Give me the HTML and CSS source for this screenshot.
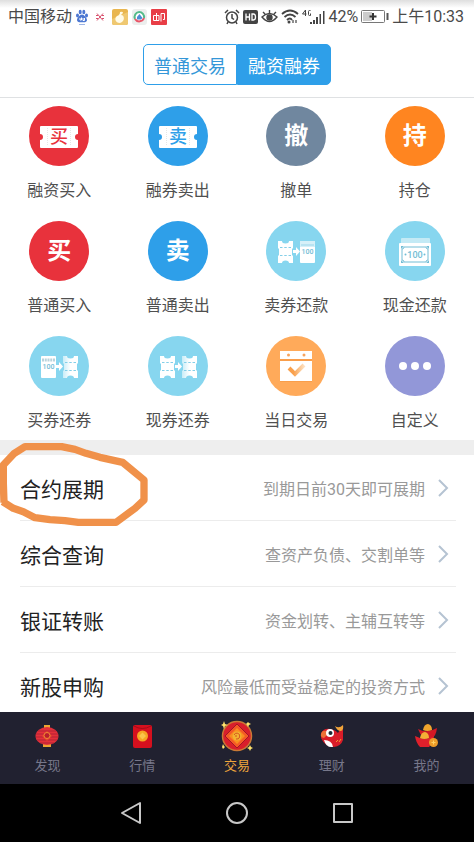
FILE: index.html
```html
<!DOCTYPE html>
<html lang="zh-CN">
<head>
<meta charset="utf-8">
<meta name="viewport" content="width=device-width, initial-scale=1">
<title>融资融券</title>
<link rel="stylesheet" href="styles.css">
</head>
<body>
<svg class="defs" aria-hidden="true">
  <defs>
    <linearGradient id="fade" x1="0" x2="1"><stop offset="0" stop-color="#c9edf8"/><stop offset=".5" stop-color="#fff"/></linearGradient>
    <linearGradient id="tick" x1="0" x2="1"><stop offset=".3" stop-color="#f9a04c"/><stop offset="1" stop-color="#fde0c0"/></linearGradient>
    <symbol id="ticket" viewBox="0 0 38 22"><path fill="#fff" d="M1 0h36q1 0 1 1v7a3 3 0 0 0 0 6v7q0 1-1 1H1q-1 0-1-1v-7a3 3 0 0 0 0-6V1q0-1 1-1z"/><path d="M7.500 2v18M30.500 2v18" stroke="#e6e6e6" stroke-dasharray="1 1"/></symbol>
    <symbol id="coupon" viewBox="0 0 15 22"><path d="M0 0h4a3.500 2.500 0 0 0 7 0h4v7l-1 1v6l1 1v7h-4a3.500 2.500 0 0 0-7 0H0v-7l1-1V8L0 7z"/><path d="M2 6.500h11M2 14.500h11" stroke="#84cfe8" stroke-dasharray="2.500 1.750"/></symbol>
    <symbol id="arrow" viewBox="0 0 7 9"><path fill="#fff" d="M0 3h3V0l4 4.500L3 9V6H0z"/></symbol>
  </defs>
</svg>
<div class="app">
  <header class="status">
    <div class="status-group">
      <span class="carrier">中国移动</span>
      <svg width="12" height="16" viewBox="0 0 12 16"><g fill="#4d78d2"><ellipse cx="1.500" cy="6.500" rx="1.500" ry="2"/><ellipse cx="4.200" cy="3" rx="1.500" ry="2.200"/><ellipse cx="7.800" cy="3" rx="1.500" ry="2.200"/><ellipse cx="10.500" cy="6.500" rx="1.500" ry="2"/><path d="M6 5.500c2 0 5 3.500 5 5.500s-2 2.500-5 2.200C3 13.500 1 13 1 11s3-5.500 5-5.500z"/></g><path d="M4 9v2h1.500V8.500M7 9v2.500h1.500V9" fill="none" stroke="#fff"/><path d="M3 15.500h6" stroke="#9db4e4"/></svg>
      <svg class="cross" width="8" height="8" viewBox="0 0 8 8"><path d="M1 .5l6 7M7 .5l-6 7M0 2.500h2M6 2.500h2M0 5.500h2M6 5.500h2" fill="none" stroke="#d8506c"/></svg>
      <svg width="16" height="16" viewBox="0 0 16 16"><rect width="16" height="16" rx="2" fill="#e9b64f"/><path d="M0 10L16 3v11q0 2-2 2H2q-2 0-2-2z" fill="#efc871"/><path d="M8 3q3-1 3 1L9 6c4 0 4 7-1 8-5 0-6-5-3-7q3-1 3-4z" fill="#fffbe8"/></svg>
      <svg width="15" height="16" viewBox="0 0 15 16"><rect width="15" height="16" rx="3" fill="#eceeed"/><circle cx="7.500" cy="8" r="5" fill="#fff"/><g fill="none" stroke-width="2"><path d="M3 10a5 5 0 0 1 4-7" stroke="#54bb8a"/><path d="M7 3a5 5 0 0 1 5 6" stroke="#54bb8a"/><path d="M12 9a5 5 0 0 1-9 1" stroke="#e95668"/></g><path d="M5 10.500V8l2.500-3 3 4-1.500 1.500z" fill="#4d8bd4"/></svg>
      <svg width="16" height="16" viewBox="0 0 16 16"><rect width="16" height="16" rx="1" fill="#e83e46"/><path d="M2.500 6.500H8v5H2.500zM5.500 4v7.500M10 12.500V4.500h3.500v6H12" fill="none" stroke="#fff"/></svg>
    </div>
    <div class="status-group status-right">
      <svg width="16" height="16" viewBox="0 0 16 16" fill="none" stroke="#444" stroke-width="1.500"><circle cx="8" cy="8.500" r="5.500"/><path d="M8 5v4l2 1.500M1 4l3-3M15 4l-3-3M4 13l-1 2M12 13l1 2"/></svg>
      <svg width="15" height="14" viewBox="0 0 15 14"><rect width="15" height="14" rx="2" fill="#444"/><path d="M3 3.500v7M6.500 3.500v7M3 7h3.500M9 4h1.500q2 0 2 3t-2 3H9z" fill="none" stroke="#fff" stroke-width="1.300"/></svg>
      <svg width="17" height="15" viewBox="0 0 17 15" fill="none" stroke="#444" stroke-width="1.400"><path d="M1 8q7.500-7 15 0-7.500 9-15 0zM8.500 4V1M4 5L2 3M13 5l2-2"/><circle cx="8.500" cy="8.500" r="2.500" fill="#444"/></svg>
      <svg width="18" height="15" viewBox="0 0 18 15" fill="none" stroke="#444" stroke-width="1.800"><path d="M1 5q8-7 16 0M3.500 8q5.500-5 11 0M6 11q3-3 5 0"/><circle cx="8" cy="13" r="1.500" fill="#444" stroke="none"/><path d="M12 11v3M15 11v3" stroke-width="1.200"/></svg>
      <svg width="23" height="16" viewBox="0 0 23 16"><path d="M3.500 7V1L.5 5H4.500M8.500 1.500h-1q-1 0-1 1v3q0 1 1 1h1V4.500" fill="none" stroke="#444"/><path d="M8 13h2v2H8zM11 11h2v4h-2zM14 8h2v7h-2zM17.500 5h1.500v10h-1.500zM21 2h1.500v13H21z" fill="#444"/></svg>
      <span>42%</span>
      <svg width="28" height="13" viewBox="0 0 28 13"><rect x=".5" y=".5" width="23" height="12" rx="1" fill="#fff" stroke="#777"/><rect x="2" y="2" width="9" height="9" fill="#ccc"/><path d="M12 3v7M8.500 6.500h7" stroke="#333" stroke-width="2"/><path d="M26.500 3v7" stroke="#555" stroke-width="2"/></svg>
      <span class="time">上午10:33</span>
    </div>
  </header>

  <nav class="switcher">
    <button class="switch" type="button">普通交易</button>
    <button class="switch switch-on" type="button">融资融券</button>
  </nav>

  <main class="content">
    <section class="grid">
      <a class="item" href="#"><span class="disc red"><svg width="60" height="60" viewBox="0 0 60 60"><use href="#ticket" x="11" y="20" width="38" height="22"/><text class="glyph" x="30" y="37" fill="#e8323c">买</text></svg></span>融资买入</a>
      <a class="item" href="#"><span class="disc blue"><svg width="60" height="60" viewBox="0 0 60 60"><use href="#ticket" x="11" y="20" width="38" height="22"/><text class="glyph" x="30" y="37" fill="#2e9fe9">卖</text></svg></span>融券卖出</a>
      <a class="item" href="#"><span class="disc slate">撤</span>撤单</a>
      <a class="item" href="#"><span class="disc orange">持</span>持仓</a>

      <a class="item" href="#"><span class="disc red">买</span>普通买入</a>
      <a class="item" href="#"><span class="disc blue">卖</span>普通卖出</a>
      <a class="item" href="#"><span class="disc cyan"><svg width="60" height="60" viewBox="0 0 60 60"><use href="#coupon" x="12" y="20" width="15" height="22" fill="#fff"/><use href="#arrow" x="27" y="26" width="7" height="9"/><rect x="34" y="20" width="15" height="22" rx="1" fill="#fff"/><path d="M34 20h15v6H34z" fill="#d6f0f8"/><path d="M35 24h13" stroke="#9ad6ea"/><text class="note" x="41.500" y="33">100</text></svg></span>卖券还款</a>
      <a class="item" href="#"><span class="disc cyan"><svg width="60" height="60" viewBox="0 0 60 60"><rect x="16" y="17" width="29" height="8" rx="1" fill="#c4eaf5"/><rect x="14" y="22" width="32" height="23" rx="1" fill="#fff"/><path d="M19 26h22a2 2 0 0 0 2 2v11a2 2 0 0 0-2 2H19a2 2 0 0 0-2-2V28a2 2 0 0 0 2-2z" fill="none" stroke="#72bdd5"/><path d="M16 25h3l-3 3zM44 25v3l-3-3zM16 42v-3l3 3zM44 42h-3l3-3z" fill="#72bdd5"/><circle cx="20.500" cy="33.500" r="1" fill="#72bdd5"/><circle cx="39.500" cy="33.500" r="1" fill="#72bdd5"/><text class="note note-big" x="30" y="37">100</text></svg></span>现金还款</a>

      <a class="item" href="#"><span class="disc cyan"><svg width="60" height="60" viewBox="0 0 60 60"><rect x="12" y="20" width="15" height="22" rx="1" fill="#fff"/><path d="M13 24h13" stroke="#b9d3dc" stroke-width="3" stroke-dasharray="2 .750"/><text class="note" x="19.500" y="33">100</text><use href="#arrow" x="27" y="26" width="7" height="9"/><use href="#coupon" x="34" y="20" width="15" height="22" fill="url(#fade)"/></svg></span>买券还券</a>
      <a class="item" href="#"><span class="disc cyan"><svg width="60" height="60" viewBox="0 0 60 60"><use href="#coupon" x="12" y="20" width="15" height="22" fill="#fff"/><use href="#arrow" x="27" y="26" width="7" height="9"/><use href="#coupon" x="34" y="20" width="15" height="22" fill="url(#fade)"/></svg></span>现券还券</a>
      <a class="item" href="#"><span class="disc amber"><svg width="60" height="60" viewBox="0 0 60 60"><path d="M14 16h32v29H14z" fill="#f3923b" opacity=".5" transform="translate(0 1)"/><path d="M14 15h32v8H14zM14 25h32v20H14z" fill="#fff"/><circle cx="22.500" cy="19" r="1.500" fill="#f7a35c"/><circle cx="38" cy="19" r="1.500" fill="#f7a35c"/><path d="M23 32l6 6 9-9" fill="none" stroke="url(#tick)" stroke-width="4"/></svg></span>当日交易</a>
      <a class="item" href="#"><span class="disc violet"><svg width="60" height="60" viewBox="0 0 60 60" fill="#fff"><circle cx="18" cy="30" r="4"/><circle cx="30" cy="30" r="4"/><circle cx="42" cy="30" r="4"/></svg></span>自定义</a>
    </section>

    <section class="list">
      <a class="row" href="#"><span class="row-title">合约展期</span><span class="row-note">到期日前30天即可展期</span><svg class="chevron" width="11" height="20" viewBox="0 0 11 20"><path d="M1 2l8 8-8 8"/></svg>
        <svg class="marker" width="150" height="95" viewBox="0 0 450 285"><path d="M12 203L10 145 10 90 43 55 75 35 185 35 225 43 258 55 300 67 368 82 432 135 432 195 405 220 348 262 235 262 195 257 150 254 105 248 70 230 40 220 8 200"/></svg></a>
      <a class="row" href="#"><span class="row-title">综合查询</span><span class="row-note">查资产负债、交割单等</span><svg class="chevron" width="11" height="20" viewBox="0 0 11 20"><path d="M1 2l8 8-8 8"/></svg></a>
      <a class="row" href="#"><span class="row-title">银证转账</span><span class="row-note">资金划转、主辅互转等</span><svg class="chevron" width="11" height="20" viewBox="0 0 11 20"><path d="M1 2l8 8-8 8"/></svg></a>
      <a class="row" href="#"><span class="row-title">新股申购</span><span class="row-note">风险最低而受益稳定的投资方式</span><svg class="chevron" width="11" height="20" viewBox="0 0 11 20"><path d="M1 2l8 8-8 8"/></svg></a>
    </section>
  </main>

  <nav class="tabs">
    <a class="tab" href="#"><svg width="32" height="32" viewBox="0 0 32 32"><path d="M13 5h6v3h-6zM12 24h8v3h-8z" fill="#eda532"/><ellipse cx="16" cy="16" rx="11.500" ry="9" fill="#e3303a"/><path d="M7 11h18M5 14h22M5 17h22M6 20h20M9 23h14" stroke="#b32235"/><path d="M16 11l5 5-5 5-5-5z" fill="#e8442f"/><circle cx="16" cy="15.500" r="3" fill="#b91e2d" stroke="#f08c32"/></svg>发现</a>
    <a class="tab" href="#"><svg width="32" height="32" viewBox="0 0 32 32"><rect x="7" y="5" width="19" height="23" rx="2" fill="#d5101e"/><path d="M8 6q8 5 17 0" stroke="#a50b19" fill="none"/><circle cx="16.500" cy="16" r="5.500" fill="#f6a623"/><path d="M16.500 12.500L20 16l-3.500 3.500L13 16z" fill="#fbc64a"/></svg>行情</a>
    <a class="tab tab-on" href="#"><svg width="32" height="32" viewBox="0 0 32 32"><circle cx="16" cy="16" r="14.500" fill="#d91f2b" stroke="#c97936" stroke-width="1.500"/><path d="M16 4l12 12-12 12L4 16z" fill="#f45a25" stroke="#a51426"/><path d="M16 8l8 8-8 8-8-8z" fill="#f98e20"/><circle cx="16" cy="16" r="4.500" fill="#f2b431"/><path d="M13 15a3 3 0 1 1 2 4M16 16h-2" stroke="#d6521f" fill="none"/><path d="M3 1l1 3 3 1-3 1-1 3-1-3-2-1 2-1zM29 25l1 2 2 1-2 1-1 2-1-2-2-1 2-1zM27 2l1 1 2 1-2 1-1 2-1-2-1-1 1-1zM2 24l1 2 1 1-2 2-1-2z" fill="#ffe36c"/></svg>交易</a>
    <a class="tab" href="#"><svg width="32" height="32" viewBox="0 0 32 32"><path d="M5 14q2-6 9-5 6 1 8 4l3-5 2 2v10q-2 6-9 7-9 0-13-9z" fill="#d91c28"/><path d="M5 14q1-4 5-3l2 3-4 4q-4-1-3-4z" fill="#ee7136"/><path d="M8 20q8 0 9 7-7 1-9-7z" fill="#fff"/><circle cx="14" cy="13" r="4" fill="#fff"/><circle cx="14.500" cy="13" r="2" fill="#1b2a35"/><path d="M19 6q4 3 8-1 1 5-2 6-4 0-6-5z" fill="#f2a43a"/><path d="M20 22l2-2M23 22l2-3" stroke="#f29834"/></svg>理财</a>
    <a class="tab" href="#"><svg width="32" height="32" viewBox="0 0 32 32"><path d="M7 9q9 5 19-1-1 8-5 10H12Q9 14 7 9z" fill="#d31925"/><path d="M12 10q1-6 5-6 4 1 4 6-5 2-9 0z" fill="#f1a52d"/><path d="M4 16q10 5 19 0-1 8-5 11h-9Q5 23 4 16z" fill="#df202b"/><path d="M9 18q1-6 5-6 4 1 4 6-5 2-9 0z" fill="#f4ad36"/><circle cx="22.500" cy="22.500" r="4.500" fill="#ee9d29"/><path d="M20.500 22.500h4M22.500 20.500v4" stroke="#ffd266"/></svg>我的</a>
  </nav>

  <footer class="system">
    <button type="button" aria-label="返回"><svg width="24" height="24" viewBox="0 0 24 24"><path d="M21 2v20L3 12z"/></svg></button>
    <button type="button" aria-label="主屏幕"><svg width="24" height="24" viewBox="0 0 24 24"><circle cx="12" cy="12" r="10"/></svg></button>
    <button type="button" aria-label="最近任务"><svg width="24" height="24" viewBox="0 0 24 24"><path d="M3 3h18v18H3z"/></svg></button>
  </footer>
</div>
</body>
</html>
```
FILE: styles.css
```css
* { box-sizing: border-box; }

body {
  margin: 0;
  background: #fff;
  font-family: Roboto, "Noto Sans CJK SC", sans-serif;
  font-size: 16px;
  color: #505050;
}

a { color: inherit; text-decoration: none; }
button { font: inherit; padding: 0; margin: 0; cursor: pointer; }
svg { display: block; flex: none; }
.defs { position: absolute; width: 0; height: 0; }

.app {
  display: flex;
  flex-direction: column;
  height: 100vh;
}

.status {
  flex: none;
  display: flex;
  justify-content: space-between;
  align-items: center;
  height: 32px;
  padding: 1px 10px 0 8px;
  background: linear-gradient(#dedede, #fff 8px);
  color: #4a4a4a;
  line-height: 32px;
  white-space: nowrap;
}
.status-group { display: flex; align-items: center; gap: 4px; }
.status-right { gap: 3px; }
.cross { margin: 0 4px; }

.switcher {
  flex: none;
  display: flex;
  justify-content: center;
  padding: 12px 0;
  border-bottom: 1px solid #dfe1e3;
}
.switch {
  width: 94px;
  height: 41px;
  border: 1px solid #2e9fe9;
  border-radius: 5px 0 0 5px;
  background: #fff;
  color: #3497d8;
  font-size: 18px;
}
.switch-on {
  border-radius: 0 5px 5px 0;
  background: #2e9fe9;
  color: #fff;
}

.content {
  flex: 1;
  min-height: 0;
  overflow: hidden;
}

.grid {
  display: grid;
  grid-template-columns: repeat(4, 1fr);
  row-gap: 18px;
  padding: 8px 0 7px;
}
.item {
  display: flex;
  flex-direction: column;
  align-items: center;
  gap: 13px;
  line-height: 24px;
}
.disc {
  display: flex;
  align-items: center;
  justify-content: center;
  width: 60px;
  height: 60px;
  border-radius: 50%;
  color: #fff;
  font-size: 24px;
  font-weight: 700;
}
.red { background: #e8323c; }
.blue { background: #2e9fe9; }
.slate { background: #70879f; }
.orange { background: #ff8520; }
.cyan { background: #87d6ef; }
.amber { background: #ffaa5a; }
.violet { background: #9297d8; }
.glyph { font-size: 18px; font-weight: 500; text-anchor: middle; }
.note { font-size: 7px; font-weight: 500; text-anchor: middle; fill: #72bdd5; }
.note-big { font-size: 9px; }

.list { border-top: 15px solid #eee; }
.row {
  position: relative;
  display: flex;
  align-items: center;
  height: 66px;
  margin: 0 18px 0 20px;
  padding-right: 7px;
  border-bottom: 1px solid #ececec;
}
.row-title { font-size: 21px; color: #222; }
.row-note { margin-left: auto; margin-right: 13px; color: #999; }
.chevron { fill: none; stroke: #b5c3d2; stroke-width: 2; }
.marker {
  position: absolute;
  z-index: 1;
  left: -20px;
  top: -20px;
  fill: none;
  stroke: #f0914a;
  stroke-width: 22;
  stroke-linejoin: round;
  pointer-events: none;
}

.tabs {
  flex: none;
  display: grid;
  grid-template-columns: repeat(5, 1fr);
  height: 72px;
  padding-top: 8px;
  background: #212130;
}
.tab {
  display: flex;
  flex-direction: column;
  align-items: center;
  gap: 4px;
  color: #77778a;
  font-size: 13px;
  line-height: 20px;
}
.tab-on { color: #f0a63c; }

.system {
  flex: none;
  display: flex;
  justify-content: center;
  align-items: center;
  gap: 82px;
  height: 58px;
  background: #000;
}
.system button { border: 0; background: none; }
.system svg { fill: none; stroke: #c8c8c8; stroke-width: 2; stroke-linejoin: round; }
```
